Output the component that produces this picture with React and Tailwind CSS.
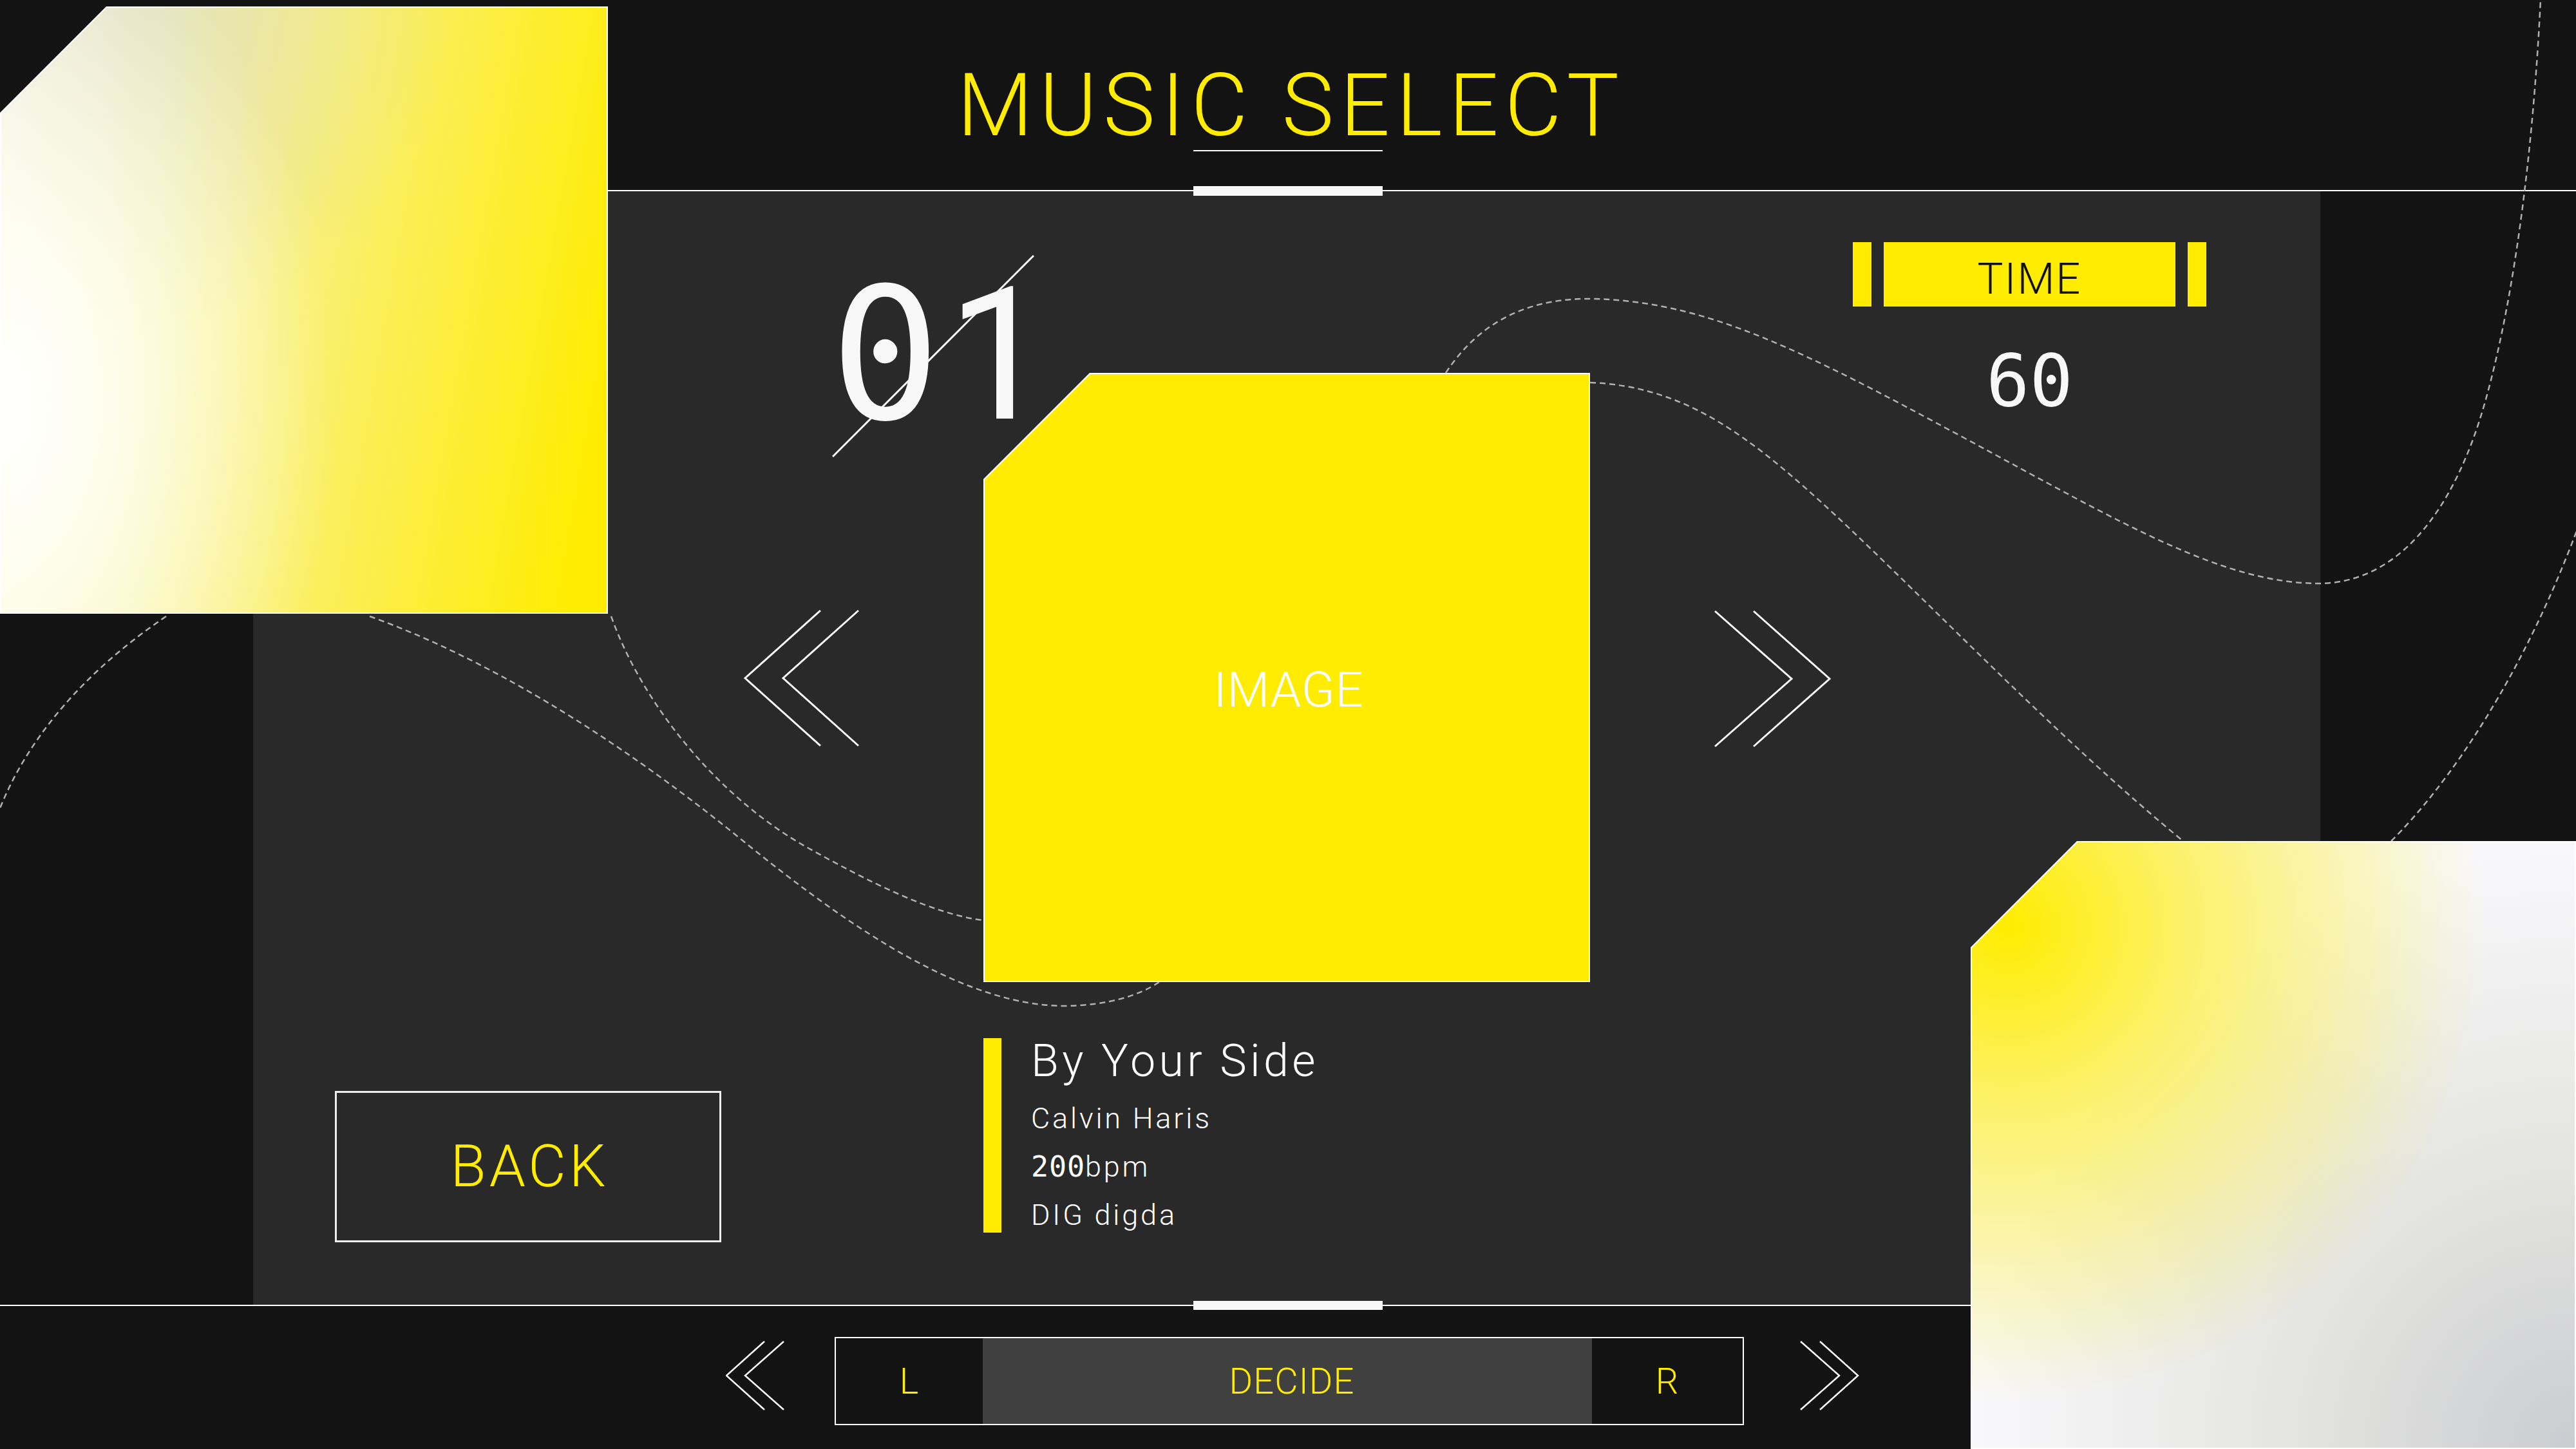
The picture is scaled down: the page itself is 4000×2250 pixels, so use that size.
import React from 'react';

const mono = "font-['DejaVu_Sans_Mono',monospace] font-normal";

const App = () => {
    return (
        <div className="relative w-[4000px] h-[2250px] overflow-hidden bg-[#131313] font-['Roboto','Liberation_Sans',sans-serif] font-light">
            {/* header */}
            <header className="relative h-[297px] border-b-2 border-white pt-[96px]">
                <h1 className="pl-[10px] text-center text-[136px] leading-none tracking-[0.072em] text-[#ffec00]">MUSIC SELECT</h1>
                <div className="mx-auto mt-px h-[2px] w-[294px] bg-white" />
                <div className="absolute bottom-[-9px] left-1/2 h-[15px] w-[294px] -translate-x-1/2 bg-[#f8f8f8]" />
            </header>

            {/* main */}
            <main className="flex h-[1729px]">
                <div className="w-[393px]" />
                <div className="flex w-[3210px] bg-[#292929]">
                    {/* left column */}
                    <div className="flex w-[1134px] flex-col">
                        <svg className="mt-[649px] mr-[192px] self-end" width="180" height="214" fill="none" stroke="#f8f8f8" strokeWidth="3">
                            <polyline points="119,2 2,107 119,212" />
                            <polyline points="178,2 61,107 178,212" />
                        </svg>
                        <button className="ml-[127px] mt-[534px] flex h-[235px] w-[600px] items-center justify-center border-[3px] border-[#eeeeee] pl-[5px] text-[90px] leading-none tracking-[0.055em] text-[#ffec00]">
                            BACK
                        </button>
                    </div>

                    {/* center column */}
                    <div className="flex w-[942px] flex-col">
                        <div className="relative z-10 mt-[282px] h-[946px] w-[942px]">
                            <span className="absolute left-[-238px] top-[-171px] flex items-baseline leading-none text-[#f8f8f8]">
                                <span className={`text-[285px] ${mono}`}>0</span>
                                <span className="ml-[10px] text-[288px] font-normal">1</span>
                            </span>
                            <svg className="absolute left-[-235px] top-[-183px]" width="314" height="314" stroke="#f8f8f8" strokeWidth="3">
                                <line x1="1" y1="313" x2="313" y2="1" />
                            </svg>
                            <div className="h-full w-full bg-white p-[2px] [clip-path:polygon(165px_0,100%_0,100%_100%,0_100%,0_165px)]">
                                <div className="flex h-full w-full items-center justify-center bg-[#ffec00] pt-[38px] pl-[6px] text-[76px] leading-none tracking-[0.01em] text-white [clip-path:polygon(164px_0,100%_0,100%_100%,0_100%,0_164px)]">
                                    IMAGE
                                </div>
                            </div>
                        </div>

                        <div className="mt-[87px] flex">
                            <div className="h-[302px] w-[28px] bg-[#ffec00]" />
                            <div className="pl-[46px] text-white">
                                <p className="text-[70px] leading-none tracking-[0.075em]">By Your Side</p>
                                <p className="mt-[32px] text-[45px] leading-none tracking-[0.085em]">Calvin Haris</p>
                                <p className="mt-[30px] text-[45px] leading-none tracking-[0.085em]">
                                    <span className={`tracking-[0.02em] ${mono}`}>200</span>bpm
                                </p>
                                <p className="mt-[30px] text-[45px] leading-none tracking-[0.085em]">DIG digda</p>
                            </div>
                        </div>
                    </div>

                    {/* right column */}
                    <div className="flex w-[1134px] flex-col">
                        <div className="ml-[408px] mt-[79px] w-[549px]">
                            <div className="flex h-[100px] gap-[19px]">
                                <div className="w-[29px] bg-[#ffec00]" />
                                <div className="flex flex-1 items-center justify-center bg-[#ffec00] pt-[14px] text-[67px] leading-none tracking-[0.03em] text-[#111111]">
                                    TIME
                                </div>
                                <div className="w-[29px] bg-[#ffec00]" />
                            </div>
                            <p className={`mt-[59px] text-center text-[112px] leading-none text-[#f8f8f8] ${mono}`}>60</p>
                        </div>
                        <svg className="ml-[192px] mt-[300px]" width="182" height="214" fill="none" stroke="#f8f8f8" strokeWidth="3">
                            <polyline points="2,2 121,107 2,212" />
                            <polyline points="62,2 180,107 62,212" />
                        </svg>
                    </div>
                </div>
                <div className="flex-1" />
            </main>

            {/* footer */}
            <footer className="relative h-[224px] border-t-2 border-white">
                <div className="absolute left-1/2 top-[-8px] h-[14px] w-[294px] -translate-x-1/2 bg-[#f8f8f8]" />
                <div className="flex justify-center pl-[14px]">
                    <svg className="mt-[54px]" width="92" height="108" fill="none" stroke="#f8f8f8" strokeWidth="2.5">
                        <polyline points="60,1 1,54 60,107" />
                        <polyline points="90,1 30,54 90,107" />
                    </svg>
                    <div className="ml-[77px] mt-[48px] flex h-[137px] w-[1412px] border-2 border-white text-[56px] leading-none tracking-[0.02em] text-[#ffec00]">
                        <div className="flex w-[228px] items-center justify-center">L</div>
                        <div className="flex w-[946px] items-center justify-center bg-[#404040] pl-[14px]">DECIDE</div>
                        <div className="flex flex-1 items-center justify-center">R</div>
                    </div>
                    <svg className="ml-[87px] mt-[54px]" width="92" height="108" fill="none" stroke="#f8f8f8" strokeWidth="2.5">
                        <polyline points="1,1 61,54 1,107" />
                        <polyline points="31,1 90,54 31,107" />
                    </svg>
                </div>
            </footer>

            {/* dashed guide curves */}
            <svg className="pointer-events-none absolute left-0 top-0 z-[5]" width="4000" height="2250" viewBox="0 0 4000 2250" fill="none" stroke="#b0b0b0" strokeWidth="2.5" strokeDasharray="9 6">
                <path d="M2245,579 C2300,495 2380,462 2474,464 C2650,468 2800,545 3050,680 C3300,815 3450,905 3600,906 C3720,906 3810,800 3860,620 C3910,440 3935,200 3945,0" />
                <path d="M2469,594 C2620,600 2720,680 2850,800 C3000,940 3200,1150 3390,1306" />
                <path d="M3713,1306 C3800,1220 3920,1050 4010,800" />
                <path d="M949,957 C1000,1100 1120,1240 1250,1314 C1350,1370 1450,1420 1527,1429" />
                <path d="M574,957 C750,1020 950,1140 1148,1301 C1330,1450 1500,1560 1650,1562 C1720,1562 1770,1545 1800,1525" />
                <path d="M258,957 C150,1030 50,1130 0,1255" />
            </svg>

            {/* gradient corner panels */}
            <div className="absolute left-0 top-[10px] z-20 h-[943px] w-[944px] bg-white p-[2px] [clip-path:polygon(165px_0,100%_0,100%_100%,0_100%,0_165px)]">
                <div className="h-full w-full [clip-path:polygon(164px_0,100%_0,100%_100%,0_100%,0_164px)] [background-image:radial-gradient(ellipse_55%_85%_at_0%_66%,#ffffff_0%,rgba(255,255,248,0.85)_30%,rgba(255,255,240,0)_100%),radial-gradient(circle_at_22%_0%,rgba(200,200,195,0.45)_0%,rgba(200,200,195,0)_42%),linear-gradient(100deg,#fbfbe8_0%,#f8f2a0_34%,#fbee55_62%,#ffec00_95%)]" />
            </div>
            <div className="absolute left-[3060px] top-[1306px] z-20 h-[944px] w-[940px] bg-white p-[2px] [clip-path:polygon(165px_0,100%_0,100%_100%,0_100%,0_165px)]">
                <div className="h-full w-full bg-[#f8f8fb] [clip-path:polygon(164px_0,100%_0,100%_100%,0_100%,0_164px)] [background-image:radial-gradient(circle_at_6%_14%,#ffec00_0%,rgba(255,236,0,0.6)_22%,rgba(255,236,0,0)_62%),radial-gradient(circle_at_100%_100%,#cbccd1_0%,rgba(218,218,212,0.7)_32%,rgba(225,225,215,0)_70%)]" />
            </div>
        </div>
    );
};

export default App;
